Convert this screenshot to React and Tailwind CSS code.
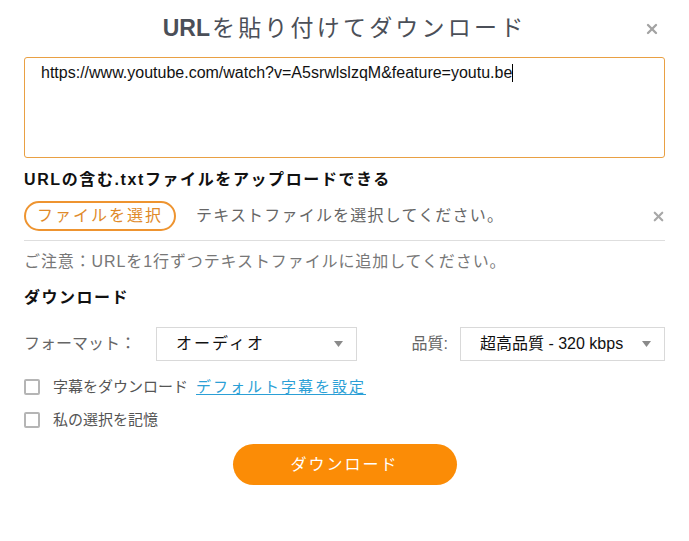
import { X } from 'lucide-react';

const font = { fontFamily: '"Liberation Sans", "Noto Sans CJK JP", sans-serif' };

const Caret = () => <span className="inline-block w-px h-[18px] bg-black align-middle -mt-[2px]" />;

const Triangle = () => (
  <svg width="9" height="6" viewBox="0 0 9 6" className="shrink-0">
    <path d="M0 0 L9 0 L4.5 6 Z" fill="#8a8a8a" />
  </svg>
);

const Select = ({ value, width, spacing }) => (
  <div className={`flex items-center justify-between h-[34px] border border-[#d9d9d9] bg-white pl-[19px] pr-[13px] ${width}`}>
    <span className={`text-[16px] text-[#111] leading-none ${spacing}`}>{value}</span>
    <Triangle />
  </div>
);

const Checkbox = ({ children }) => (
  <label className="flex items-center h-[22px] text-[15px] text-[#555]">
    <span className="w-[16px] h-[16px] border-2 border-[#b5b5b5] rounded-[2px] bg-white shrink-0" />
    <span className="ml-[13px]">{children}</span>
  </label>
);

export default function App() {
  return (
    <div className="w-[689px] h-[541px] bg-white px-[24px]" style={font}>
      {/* Header */}
      <div className="grid grid-cols-[1fr_auto_1fr] items-center h-[57px]">
        <div />
        <h1 className="text-[23px] text-[#4b4f58] tracking-[3.2px] leading-none">
          <span className="font-bold tracking-normal mr-[2px]">URL</span>を貼り付けてダウンロード
        </h1>
        <div className="flex justify-end pr-[5px]">
          <X className="w-[16px] h-[16px] text-[#a3a3a3]" strokeWidth={3.5} />
        </div>
      </div>

      {/* URL input */}
      <div className="h-[101px] border border-[#e9a043] rounded-[3px] pl-[16px] pt-[5px] text-[16px] text-[#111] leading-[20px]">
        https://www.youtube.com/watch?v=A5srwlslzqM&amp;feature=youtu.be<Caret />
      </div>

      {/* Upload */}
      <div className="mt-[11px] h-[22px] leading-[22px] text-[16px] font-bold text-[#111] tracking-[1.6px]">
        URLの含む.txtファイルをアップロードできる
      </div>

      <div className="mt-[10px] flex items-center h-[30px]">
        <button className="w-[152px] h-[30px] rounded-full border-2 border-[#ee9430] text-[#e08a2a] text-[16px] tracking-[2px] leading-none bg-white">
          ファイルを選択
        </button>
        <span className="ml-[20px] text-[16px] text-[#666] tracking-[1.2px]">テキストファイルを選択してください。</span>
        <X className="ml-auto mr-[-1px] w-[15px] h-[15px] text-[#a8a8a8]" strokeWidth={3.5} />
      </div>

      <div className="mt-[9px] border-t border-[#dedede]" />

      <div className="mt-[10px] h-[22px] leading-[22px] text-[16px] text-[#777] tracking-[0.9px]">
        ご注意：URLを1行ずつテキストファイルに追加してください。
      </div>

      {/* Download options */}
      <div className="mt-[14px] h-[22px] leading-[22px] text-[16px] font-bold text-[#111] tracking-[1.5px]">
        ダウンロード
      </div>

      <div className="mt-[18px] flex items-center">
        <span className="w-[132px] text-[16px] text-[#666]">フォーマット：</span>
        <Select value="オーディオ" width="w-[201px]" spacing="tracking-[2px]" />
        <span className="ml-auto text-[16px] text-[#666]">品質:</span>
        <div className="ml-[12px]">
          <Select value="超高品質 - 320 kbps" width="w-[205px]" spacing="" />
        </div>
      </div>

      <div className="mt-[15px]">
        <Checkbox>
          字幕をダウンロード
          <a href="#" className="ml-[8px] text-[#2b9fd6] underline underline-offset-2 tracking-[2px]">デフォルト字幕を設定</a>
        </Checkbox>
      </div>
      <div className="mt-[11px]">
        <Checkbox>私の選択を記憶</Checkbox>
      </div>

      <div className="mt-[13px] flex justify-center">
        <button className="w-[224px] h-[41px] rounded-full bg-[#fb8c06] text-white text-[16px] tracking-[2px]">
          ダウンロード
        </button>
      </div>
    </div>
  );
}
